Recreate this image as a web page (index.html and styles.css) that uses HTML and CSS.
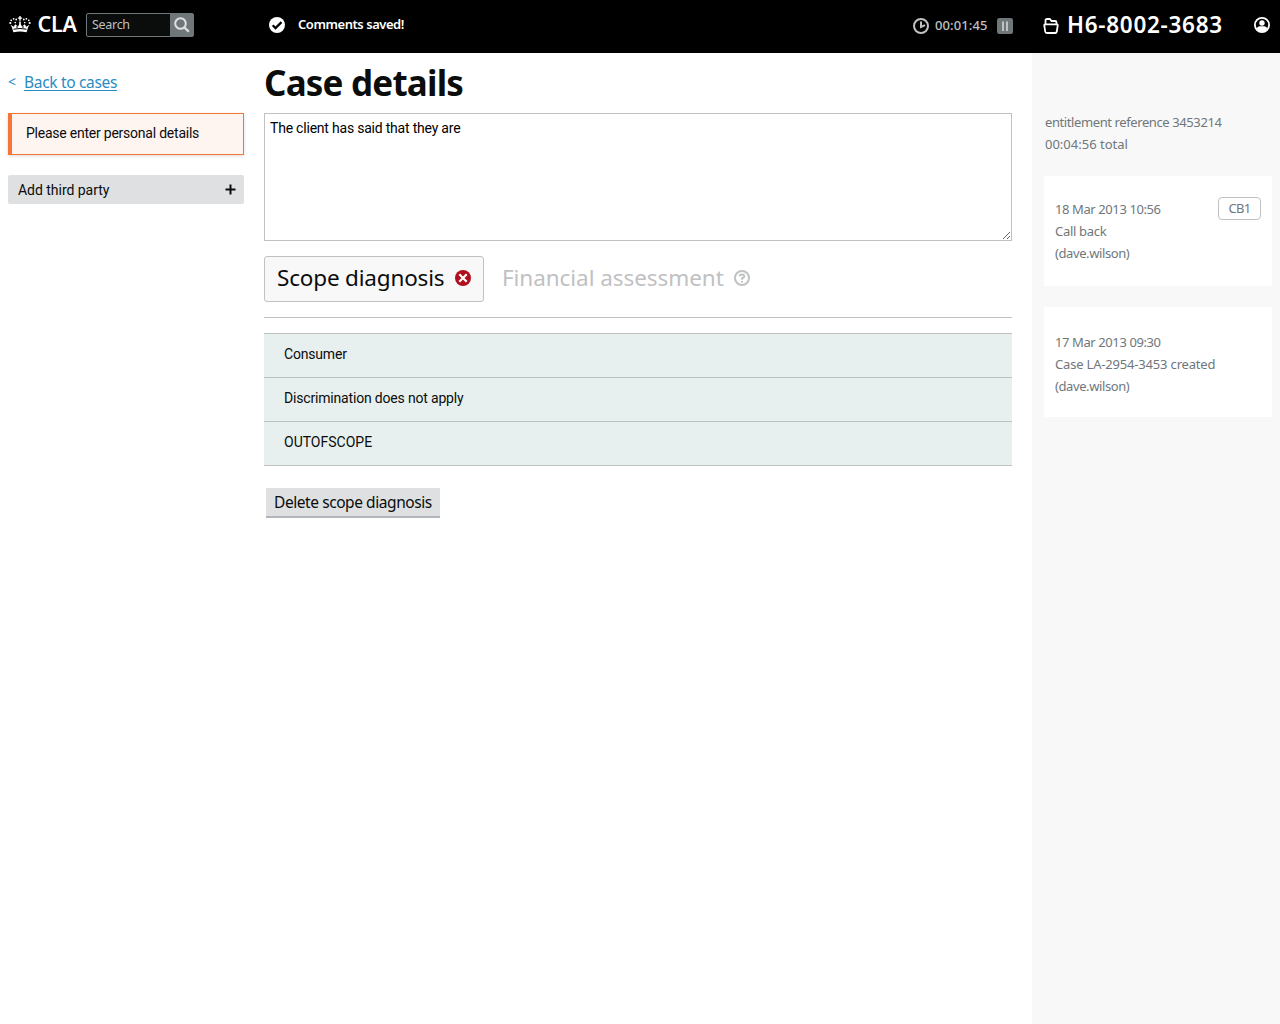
FILE: index.html
```html
<!DOCTYPE html>
<html lang="en">
<head>
<meta charset="utf-8">
<title>Case details - CLA</title>
<link rel="stylesheet" href="styles.css">
</head>
<body>
<header class="topbar">
  <div class="brand">
    <svg class="crown" width="22" height="17" viewBox="0 0 22 17" fill="#fff">
      <path d="M4.4 16.2 2.8 11 1.4 8.7 4.7 10.8 6.2 8.2 9 10.5 10.2 8.2V5.5h1.6v2.7l1.2 2.3 2.8-2.3 1.5 2.6 3.3-2.1L19.2 11l-1.6 5.2Q11 14.7 4.4 16.2Z"/>
      <path d="M10.3 0h1.4v1.4h1.4v1.4h-1.4v2h-1.4v-2H8.900V1.400h1.400z"/>
      <g><circle cx="1.300" cy="7" r="1.100"/><circle cx="2.200" cy="4.300" r=".9"/><circle cx="4.600" cy="2.800" r=".9"/><circle cx="7.200" cy="3.500" r=".9"/><circle cx="6.200" cy="6.600" r=".8"/><circle cx="20.700" cy="7" r="1.100"/><circle cx="19.800" cy="4.300" r=".9"/><circle cx="17.400" cy="2.800" r=".9"/><circle cx="14.800" cy="3.500" r=".9"/><circle cx="15.800" cy="6.600" r=".8"/></g>
      <path d="M4.500 13.200q6.500-1.400 13 0M8 10v2m6-2v2" fill="none" stroke="#000" stroke-width="1"/>
    </svg>
    <span class="brand-name">CLA</span>
    <div class="search">
      <span class="search-field">Search</span>
      <span class="search-button"><svg width="16" height="16" viewBox="0 0 16 16" fill="none" stroke="#dee0e2" stroke-width="2"><circle cx="6.500" cy="6.500" r="5.300"/><path d="m10.500 10.500 4.300 4.300" stroke-width="2.300"/></svg></span>
    </div>
  </div>
  <div class="notice">
    <svg width="16" height="16" viewBox="0 0 16 16"><circle cx="8" cy="8" r="8" fill="#fff"/><path d="m3.700 8.200 2.800 2.900 6-6" fill="none" stroke="#000" stroke-width="2.200"/></svg>
    <span class="notice-text">Comments saved!</span>
  </div>
  <div class="timer">
    <svg width="16" height="16" viewBox="0 0 16 16" fill="none" stroke="#bfc1c3" stroke-width="2"><circle cx="8" cy="8" r="7"/><path d="M8 3.500V9l4-1.800"/></svg>
    <span class="timer-text">00:01:45</span>
    <svg width="16" height="16" viewBox="0 0 16 16"><rect width="16" height="16" rx="2.500" fill="#6f777b"/><path d="M6 3.500v9.500m4-9.500v9.500" stroke="#bfc1c3" stroke-width="2"/></svg>
  </div>
  <div class="case-ref">
    <svg width="16" height="16" viewBox="0 0 16 16" fill="none" stroke="#fff" stroke-width="1.800"><path d="M2.500 6V2.500Q2.500 1 4 1h2.800l1.700 2H12q1.500 0 1.500 1.500V6"/><path d="M1.300 7.500Q1.100 6.300 2.300 6.300h11.400q1.200 0 1 1.200L13.800 13.500q-.2 1.500-1.700 1.500H3.900q-1.500 0-1.700-1.500Z"/></svg>
    <span class="case-number">H6-8002-3683</span>
  </div>
  <svg class="user" width="16" height="16" viewBox="0 0 16 16"><circle cx="8" cy="8" r="7.100" fill="none" stroke="#fff" stroke-width="1.800"/><circle cx="8" cy="6" r="2.700" fill="#fff"/><path d="M2.800 12q.4-2.700 3-2.700h4.400q2.600 0 3 2.700Q11 15 8 15T2.800 12Z" fill="#fff"/></svg>
</header>
<div class="page">
  <aside class="left">
    <div class="back"><span class="back-arrow">&lt;</span><a class="back-link" href="#">Back to cases</a></div>
    <div class="warning"><span class="warning-text">Please enter personal details</span></div>
    <div class="add-party"><span class="add-text">Add third party</span>
      <svg width="11" height="11" viewBox="0 0 11 11"><path d="M5.500.5v10M.5 5.500h10" stroke="#0b0c0c" stroke-width="2"/></svg>
    </div>
  </aside>
  <main class="main">
    <h1 class="title">Case details</h1>
    <div class="comments"><span class="comments-text">The client has said that they are</span>
      <svg class="grip" width="9" height="9" viewBox="0 0 9 9" stroke="#555" stroke-width=".9"><path d="m1 8 7-7M5 8l3-3"/></svg>
    </div>
    <nav class="tabs">
      <div class="tab tab-active"><span class="scope-text">Scope diagnosis</span>
        <svg width="16" height="16" viewBox="0 0 16 16"><circle cx="8" cy="8" r="8" fill="#b10e1e"/><path d="m4.300 4.300 7.400 7.400m0-7.400-7.400 7.400" stroke="#fff" stroke-width="2.200"/></svg>
      </div>
      <div class="tab tab-muted"><span class="financial-text">Financial assessment</span>
        <svg width="16" height="16" viewBox="0 0 16 16" fill="none" stroke="#bfc1c3" stroke-width="2"><circle cx="8" cy="8" r="7"/><path d="M5.700 6.200Q5.700 4.400 8 4.400t2.300 1.900Q10.300 7.400 8 8.500V9.700M8 10.900v1.700"/></svg>
      </div>
    </nav>
    <ul class="answers">
      <li class="answer">Consumer</li>
      <li class="answer">Discrimination does not apply</li>
      <li class="answer scope-result">OUTOFSCOPE</li>
    </ul>
    <button class="delete">Delete scope diagnosis</button>
  </main>
  <aside class="history">
    <div class="summary"><div class="entitlement">entitlement reference 3453214</div><div>00:04:56 total</div></div>
    <section class="event">
      <div><div class="event-date">18 Mar 2013 10:56</div><div class="callback">Call back</div><div class="author">(dave.wilson)</div></div>
      <span class="badge">CB1</span>
    </section>
    <section class="event event-created">
      <div><div class="event-date">17 Mar 2013 09:30</div><div class="created">Case LA-2954-3453 created</div><div class="author">(dave.wilson)</div></div>
    </section>
  </aside>
</div>
</body>
</html>
```
FILE: styles.css
```css
* { box-sizing: border-box; }
body { margin: 0; background: #fff; color: #0b0c0c; font: 14px/20px Roboto, sans-serif; }
svg { display: block; flex: none; }
span { white-space: nowrap; }

.topbar { height: 53px; background: #000; color: #fff; display: grid; grid-template-columns: 269px 644px 130px 211px 1fr; align-items: start; font-family: "Noto Sans", sans-serif; }
.brand { display: flex; padding-left: 9px; }
.crown { margin-top: 16px; }
.brand-name { font-size: 21.500px; font-weight: 600; line-height: 30px; margin: 9px 0 0 6.500px; width: 48.500px; letter-spacing: -.2px; }
.search { display: flex; width: 108px; height: 24px; margin-top: 13px; border: 1px solid #6f777b; border-radius: 2px; background: #0b0c0c; }
.search-field { width: 83px; padding-left: 5px; font-size: 12.500px; line-height: 22px; color: #bfc1c3; letter-spacing: -.3px; }
.search-button { flex: 1; display: flex; align-items: center; justify-content: center; padding-left: 1px; background: #6f777b; }
.notice { display: flex; gap: 13px; align-items: center; padding-top: 17px; height: 33px; }
.notice-text { margin-top: -2px; font-size: 13px; font-weight: 600; letter-spacing: -.45px; }
.timer { display: flex; align-items: center; height: 34px; padding-top: 18px; }
.timer-text { width: 68px; padding-left: 6px; margin-top: -2px; font-size: 13px; font-weight: 500; color: #bfc1c3; letter-spacing: .1px; }
.case-ref { display: flex; gap: 8px; align-items: center; height: 34px; padding-top: 17px; }
.case-number { margin-top: -1px; font-size: 22.500px; font-weight: 600; line-height: 30px; letter-spacing: .72px; }
.user { margin-top: 17px; }

.page { display: grid; grid-template-columns: 264px 768px 248px; min-height: 971px; }
.left { padding: 19px 20px 0 8px; }
.back { height: 20px; margin-bottom: 21px; display: flex; gap: 8px; color: #2b8cc4; font: 15.500px/20px "Noto Sans", sans-serif; }
.back-arrow { width: 8px; font-size: 14px; }
.back-link { color: inherit; white-space: nowrap; letter-spacing: -.32px; text-underline-offset: 2px; text-decoration-thickness: 1px; }
.warning { height: 42px; margin-bottom: 20px; padding: 9px 14px; border: 1px solid #f47738; border-left-width: 4px; background: #fef5f0; box-shadow: 0 1px 3px rgba(0, 0, 0, .15); }
.warning-text { letter-spacing: -.23px; }
.add-party { height: 29px; padding: 0 8px 0 10px; display: flex; align-items: center; justify-content: space-between; border-radius: 2px; background: #dee0e2; }
.add-text { letter-spacing: -.03px; }

.main { padding-right: 20px; }
.title { margin: 0; height: 60px; padding-top: 8px; font: 700 35px/44px "Noto Sans", sans-serif; letter-spacing: -.8px; }
.comments { position: relative; height: 128px; padding: 4px 5px; border: 1px solid #bfc1c3; color: #000; letter-spacing: -.21px; }
.grip { position: absolute; right: 0; bottom: 0; }
.tabs { height: 77px; padding-top: 15px; display: flex; border-bottom: 1px solid #bfc1c3; font: 22.500px/30px "Noto Sans", sans-serif; }
.tab { height: 46px; display: flex; align-items: center; gap: 10px; }
.tab span { margin-top: -3px; }
.scope-text { letter-spacing: -.18px; }
.financial-text { letter-spacing: -.06px; }
.tab svg { margin-top: -2px; }
.tab-active { width: 220px; padding: 0 12px; justify-content: space-between; border: 1px solid #bfc1c3; border-radius: 3px; background: #f8f8f8; }
.tab-muted { width: 266px; padding-left: 18px; justify-content: space-between; color: #bfc1c3; }
.answers { list-style: none; margin: 15px 0 22px; padding: 0; border-top: 1px solid #bfc1c3; }
.answer { height: 44px; padding: 10px 20px 0; border-bottom: 1px solid #bfc1c3; background: #e7f0ee; letter-spacing: -.18px; }
.scope-result { letter-spacing: 0; }
.delete { display: block; width: 174px; height: 30px; margin: 0 0 0 2px; padding: 0 8px; border: 0; border-bottom: 2px solid #b2b6ba; background: #dee0e2; color: inherit; font: 15.500px/28px "Noto Sans", sans-serif; letter-spacing: -.43px; text-align: left; white-space: nowrap; }

.history { padding: 58px 8px 0 12px; background: #f8f8f8; color: #6f777b; font: 13px/22px "Noto Sans", sans-serif; }
.summary { height: 65px; padding-left: 1px; }
.entitlement, .event-date, .author { letter-spacing: -.4px; }
.callback { letter-spacing: -.3px; }
.created { letter-spacing: -.18px; }
.event { height: 110px; padding: 22px 11px 0; margin-bottom: 21px; display: flex; justify-content: space-between; background: #fff; }
.event-created { padding-top: 24px; }
.badge { width: 43px; height: 23px; margin-top: -1px; border: 1px solid #bfc1c3; border-radius: 4px; text-align: center; line-height: 20px; letter-spacing: -.7px; }
```
